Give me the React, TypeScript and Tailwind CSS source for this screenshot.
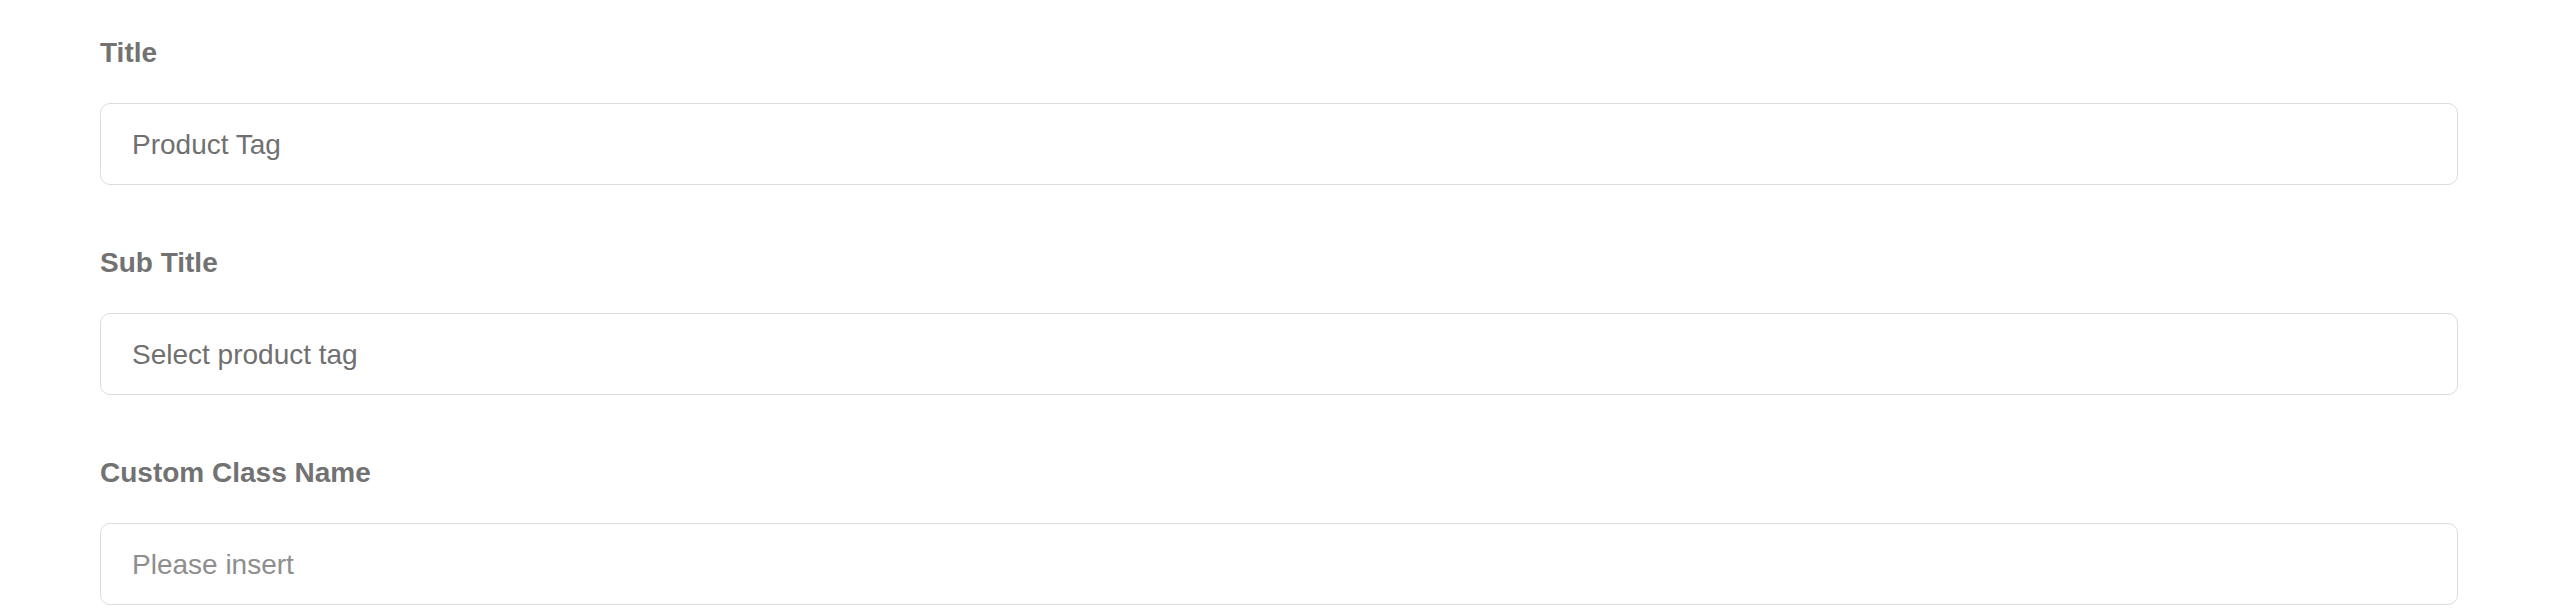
import React, { useState } from "react";

const Field = ({
  label,
  value,
  placeholder,
  onChange,
}: {
  label: string;
  value: string;
  placeholder: string;
  onChange: (v: string) => void;
}) => {
  return (
    <div className="flex flex-col gap-[36px]">
      <label className="text-[28px] leading-[28px] font-bold text-[#727272]">
        {label}
      </label>
      <input
        type="text"
        value={value}
        placeholder={placeholder}
        onChange={(e) => onChange(e.target.value)}
        className="h-[82px] w-full rounded-[10px] border border-[#dcdcdc] bg-white pl-[31px] pr-6 pt-[2px] text-[28px] text-[#707070] outline-none placeholder:text-[#8e8e8e]"
      />
    </div>
  );
};

const App = () => {
  const [title, setTitle] = useState("Product Tag");
  const [subTitle, setSubTitle] = useState("Select product tag");
  const [className, setClassName] = useState("");

  return (
    <div
      className="min-h-[608px] w-full bg-white px-[100px] pt-[39px]"
      style={{ fontFamily: '"Liberation Sans", Arial, sans-serif' }}
    >
      <div className="flex flex-col gap-[64px]">
        <Field
          label="Title"
          value={title}
          placeholder="Please insert"
          onChange={setTitle}
        />
        <Field
          label="Sub Title"
          value={subTitle}
          placeholder="Please insert"
          onChange={setSubTitle}
        />
        <Field
          label="Custom Class Name"
          value={className}
          placeholder="Please insert"
          onChange={setClassName}
        />
      </div>
    </div>
  );
};

export default App;
